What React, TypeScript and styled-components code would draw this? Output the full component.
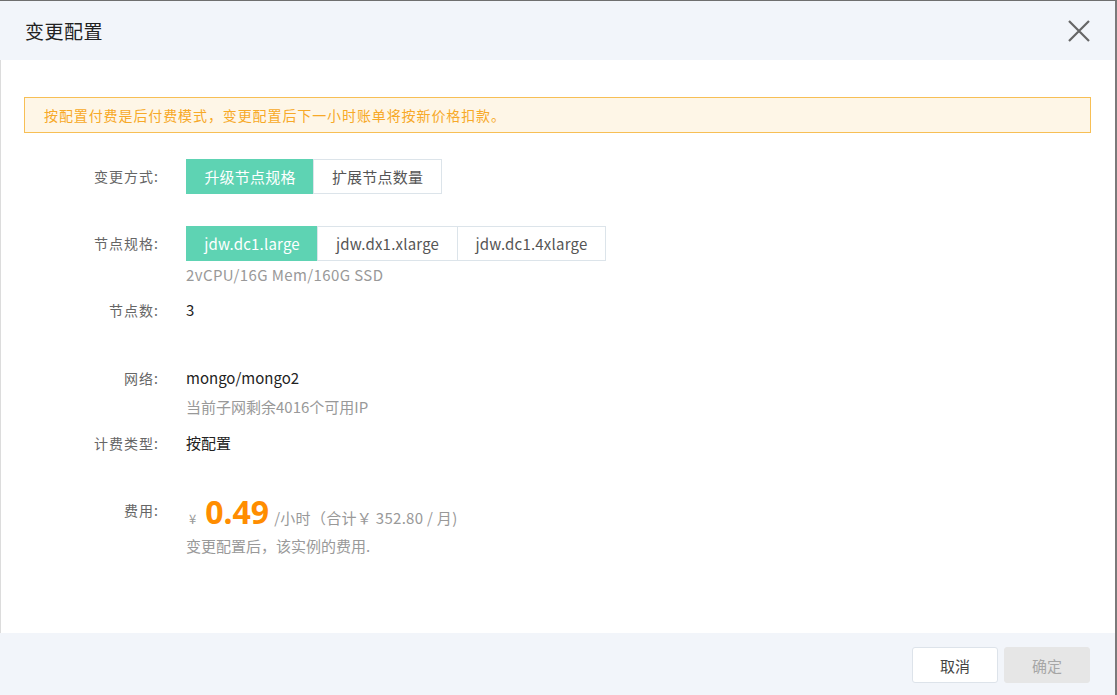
import React from "react";
import styled, { createGlobalStyle } from "styled-components";

const Global = createGlobalStyle`
  html, body { margin: 0; padding: 0; background: #fff; }
  body { font-family: "Noto Sans CJK SC", "Noto Sans", sans-serif; }
  * { box-sizing: border-box; }
`;

const Dialog = styled.div`
  width: 1117px;
  height: 695px;
  display: flex;
  flex-direction: column;
  border-top: 1px solid #6f6f6f;
  border-right: 2px solid #7a7a7a;
  overflow: hidden;
`;

const Header = styled.div`
  height: 59px;
  flex: none;
  background: #f2f5fa;
  display: flex;
  align-items: center;
  justify-content: space-between;
  padding: 0 23px 0 25px;
`;

const Title = styled.div`
  font-size: 19px;
  color: #222;
  letter-spacing: 0.5px;
`;

const CloseBtn = styled.button`
  width: 26px;
  height: 26px;
  padding: 0;
  border: 0;
  background: none;
  display: flex;
  align-items: center;
  justify-content: center;
  cursor: pointer;
`;

const Body = styled.div`
  flex: 1;
  background: #fff;
  border-left: 1px solid #dcdcdc;
  padding: 37px 24px 0 23px;
`;

const Alert = styled.div`
  height: 36px;
  border: 1px solid #f7bf55;
  background: #fef6e7;
  color: #f7a928;
  font-size: 14px;
  letter-spacing: 0.9px;
  display: flex;
  align-items: center;
  padding-left: 19px;
`;

const Row = styled.div<{ $mt: number }>`
  display: grid;
  grid-template-columns: 135px 1fr;
  column-gap: 27px;
  margin-top: ${(p) => p.$mt}px;
`;

const Label = styled.div<{ $lh: number }>`
  text-align: right;
  color: #666;
  font-size: 14px;
  letter-spacing: 1px;
  line-height: ${(p) => p.$lh}px;
`;

const Content = styled.div`
  display: flex;
  flex-direction: column;
  align-items: flex-start;
`;

const Group = styled.div`
  display: flex;
`;

const Seg = styled.button<{ $active?: boolean; $w: number }>`
  width: ${(p) => p.$w}px;
  height: 35px;
  margin-left: -1px;
  border: 1px solid ${(p) => (p.$active ? "#5ed3b3" : "#dce4ea")};
  background: ${(p) => (p.$active ? "#5ed3b3" : "#fff")};
  color: ${(p) => (p.$active ? "#fff" : "#555")};
  font-family: "Noto Sans CJK SC", sans-serif;
  font-size: 15px;
  letter-spacing: 0.2px;
  padding: 0;
  cursor: pointer;
  &:first-child { margin-left: 0; }
`;

const Value = styled.div`
  color: #222;
  font-size: 15px;
  line-height: 20px;
`;

const Hint = styled.div<{ $mt: number; $ls?: number }>`
  color: #999;
  font-size: 15px;
  line-height: 20px;
  letter-spacing: ${(p) => p.$ls ?? 0}px;
  margin-top: ${(p) => p.$mt}px;
`;

const PriceLine = styled.div`
  display: flex;
  align-items: baseline;
  height: 40px;
  color: #999;
  font-size: 15px;
`;

const Yen = styled.span`
  font-size: 13px;
  margin: 0 9px 0 3px;
`;

const Amount = styled.span`
  color: #ff8d00;
  font-size: 32px;
  font-weight: 700;
  font-family: "Noto Sans", sans-serif;
  line-height: 40px;
  margin-right: 5px;
`;

const PriceNote = styled.span`
  letter-spacing: 0.3px;
`;

const Footer = styled.div`
  height: 62px;
  flex: none;
  background: #f2f5fa;
  display: flex;
  justify-content: flex-end;
  align-items: flex-start;
  gap: 6px;
  padding: 14px 25px 0 0;
`;

const FootBtn = styled.button<{ $disabled?: boolean }>`
  width: 86px;
  height: 36px;
  border-radius: 3px;
  border: 1px solid ${(p) => (p.$disabled ? "#e6e6e6" : "#dde3ea")};
  background: ${(p) => (p.$disabled ? "#e6e6e6" : "#fff")};
  color: ${(p) => (p.$disabled ? "#a6a6a6" : "#444")};
  font-family: "Noto Sans CJK SC", sans-serif;
  font-size: 15px;
  padding: 0;
  cursor: pointer;
`;

export default function App() {
  return (
    <>
      <Global />
      <Dialog>
        <Header>
          <Title>变更配置</Title>
          <CloseBtn aria-label="close">
            <svg width="22" height="22" viewBox="0 0 22 22">
              <path d="M1 1 L21 21 M21 1 L1 21" stroke="#666" strokeWidth="2.2" fill="none" />
            </svg>
          </CloseBtn>
        </Header>
        <Body>
          <Alert>按配置付费是后付费模式，变更配置后下一小时账单将按新价格扣款。</Alert>

          <Row $mt={26}>
            <Label $lh={35}>变更方式:</Label>
            <Content>
              <Group>
                <Seg $active $w={128}>升级节点规格</Seg>
                <Seg $w={129}>扩展节点数量</Seg>
              </Group>
            </Content>
          </Row>

          <Row $mt={32}>
            <Label $lh={35}>节点规格:</Label>
            <Content>
              <Group>
                <Seg $active $w={132}>jdw.dc1.large</Seg>
                <Seg $w={141}>jdw.dx1.xlarge</Seg>
                <Seg $w={149}>jdw.dc1.4xlarge</Seg>
              </Group>
              <Hint $mt={4} $ls={0.4}>2vCPU/16G Mem/160G SSD</Hint>
            </Content>
          </Row>

          <Row $mt={15}>
            <Label $lh={20}>节点数:</Label>
            <Content>
              <Value>3</Value>
            </Content>
          </Row>

          <Row $mt={48}>
            <Label $lh={20}>网络:</Label>
            <Content>
              <Value>mongo/mongo2</Value>
              <Hint $mt={9}>当前子网剩余4016个可用IP</Hint>
            </Content>
          </Row>

          <Row $mt={16}>
            <Label $lh={20}>计费类型:</Label>
            <Content>
              <Value>按配置</Value>
            </Content>
          </Row>

          <Row $mt={39}>
            <Label $lh={36}>费用:</Label>
            <Content>
              <PriceLine>
                <Yen>¥</Yen>
                <Amount>0.49</Amount>
                <PriceNote>/小时（合计￥ 352.80 / 月)</PriceNote>
              </PriceLine>
              <Hint $mt={4}>变更配置后，该实例的费用.</Hint>
            </Content>
          </Row>
        </Body>
        <Footer>
          <FootBtn>取消</FootBtn>
          <FootBtn $disabled>确定</FootBtn>
        </Footer>
      </Dialog>
    </>
  );
}
